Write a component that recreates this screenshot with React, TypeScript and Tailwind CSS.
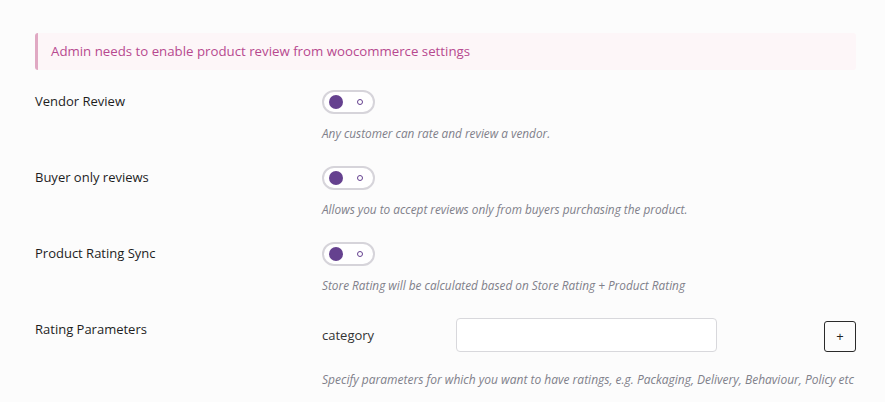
import { useState } from "react";

const toggles = [
  { label: "Vendor Review", help: "Any customer can rate and review a vendor." },
  { label: "Buyer only reviews", help: "Allows you to accept reviews only from buyers purchasing the product." },
  { label: "Product Rating Sync", help: "Store Rating will be calculated based on Store Rating + Product Rating" },
];

function Toggle() {
  const [on, setOn] = useState(false);
  return (
    <button
      onClick={() => setOn(!on)}
      className="flex h-[24px] w-[53px] items-center justify-between rounded-full border-2 border-[#d6d4da] bg-white pl-[5px] pr-[10px]"
    >
      <span className="h-[14px] w-[14px] rounded-full bg-[#65418f]" />
      <span className="h-[6px] w-[6px] rounded-full border border-[#65418f]" />
    </button>
  );
}

export default function App() {
  return (
    <div className="min-h-[402px] w-full bg-[#fcfcfc] pt-[33px] pl-[35px] pr-[29px] font-['Open_Sans',sans-serif] text-[#1e1e1e]">
      <div className="flex h-[37px] items-center rounded-[3px] border-l-[3px] border-[#e0a9c3] bg-[#fdf6f8] pl-[13px] text-[13.25px] text-[#b7498f]">
        Admin needs to enable product review from woocommerce settings
      </div>

      <div className="mt-[20px] flex flex-col gap-[25px]">
        {toggles.map((t) => (
          <div key={t.label} className="flex">
            <div className="w-[287px] pt-[1px] text-[13px] leading-[20px]">{t.label}</div>
            <div className="flex flex-col">
              <Toggle />
              <div className="mt-[11px] text-[11.8px] leading-[16px] italic text-[#80808a]">{t.help}</div>
            </div>
          </div>
        ))}

        <div className="-mt-[1px] flex">
          <div className="w-[287px] pt-[2px] text-[13px] leading-[20px]">Rating Parameters</div>
          <div className="flex flex-1 flex-col pt-[1px]">
            <div className="flex items-center">
              <div className="w-[134px] pt-[1px] text-[13px] text-[#333]">category</div>
              <input className="h-[34px] w-[261px] rounded-[4px] border border-[#d8d8dc] bg-white outline-none" />
              <button className="mt-[2px] ml-auto flex h-[31px] w-[32px] items-center justify-center rounded-[3px] border border-[#2a2a2a] text-[13px] leading-none text-[#222]">
                +
              </button>
            </div>
            <div className="mt-[20px] text-[12px] leading-[16px] italic text-[#80808a]">
              Specify parameters for which you want to have ratings, e.g. Packaging, Delivery, Behaviour, Policy etc
            </div>
          </div>
        </div>
      </div>
    </div>
  );
}
